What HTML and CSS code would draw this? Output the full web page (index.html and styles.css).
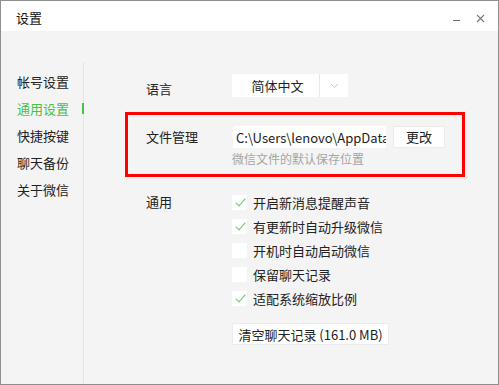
FILE: index.html
```html
<!DOCTYPE html>
<html lang="zh-CN">
<head>
    <meta charset="UTF-8">
    <meta name="viewport" content="width=device-width, initial-scale=1.0">
    <title>设置</title>
    <link rel="stylesheet" href="styles.css">
</head>
<body>

    <div class="window">
        <div class="titlebar">
            <span class="title">设置</span>
            <span class="win-min"></span>
            <span class="win-close">
                <svg width="9" height="9" viewBox="0 0 9 9"><path d="M1 1 L8 8 M8 1 L1 8" stroke="#7a7a7a" stroke-width="1.1" fill="none"/></svg>
            </span>
        </div>

        <div class="main">
            <ul class="sidebar">
                <li>帐号设置</li>
                <li class="active">通用设置</li>
                <li>快捷按键</li>
                <li>聊天备份</li>
                <li>关于微信</li>
            </ul>

            <div class="content">
                <div class="section lang-section">
                    <div class="label">语言</div>
                    <div class="select">
                        <span class="select-value">简体中文</span>
                        <span class="select-arrow">
                            <svg width="9" height="6" viewBox="0 0 9 6"><path d="M1 1 L4.5 4.5 L8 1" stroke="#c8c8c8" stroke-width="1" fill="none"/></svg>
                        </span>
                    </div>
                </div>

                <!-- highlighted block -->
                <div class="section file-section">
                    <div class="label">文件管理</div>
                    <div>
                        <div class="file-row">
                            <input class="path-input" type="text" value="C:\Users\lenovo\AppData\Roaming\Tencent\WeChat" readonly>
                            <button class="btn change-btn">更改</button>
                        </div>
                        <p class="hint">微信文件的默认保存位置</p>
                    </div>
                </div>

                <div class="section general-section">
                    <div class="label">通用</div>
                    <div class="options">
                        <label class="option"><span class="check on"></span>开启新消息提醒声音</label>
                        <label class="option"><span class="check on"></span>有更新时自动升级微信</label>
                        <label class="option"><span class="check"></span>开机时自动启动微信</label>
                        <label class="option"><span class="check"></span>保留聊天记录</label>
                        <label class="option"><span class="check on"></span>适配系统缩放比例</label>
                        <button class="btn clear-btn">清空聊天记录 (161.0 MB)</button>
                    </div>
                </div>
            </div>
        </div>
    </div>

</body>
</html>
```

FILE: styles.css
```css
body {
    margin: 0;
    font-family: "Noto Sans CJK SC", "Noto Sans", sans-serif;
    font-size: 13px;
    color: #222;
}

.window {
    width: 499px;
    height: 385px;
    box-sizing: border-box;
    border: 1px solid #8f8f8f;
    background-color: #f4f4f4;
    display: flex;
    flex-direction: column;
}

.titlebar {
    height: 30px;
    background-color: #fff;
    display: flex;
    align-items: center;
    padding: 2px 0 0 15px;
    box-sizing: border-box;
}

.title {
    flex: 1;
    font-size: 13px;
    color: #111;
}

.win-min {
    width: 7px;
    height: 1px;
    background-color: #6f6f6f;
    margin: 6px 16px 0 0;
}

.win-close {
    display: flex;
    margin: 2px 13px 0 0;
}

.main {
    flex: 1;
    display: flex;
}

.sidebar {
    list-style: none;
    margin: 31px 0 0 0;
    padding: 6px 0 0 16px;
    width: 66px;
    border-right: 1px solid #e4e4e4;
}

.sidebar li {
    line-height: 27px;
    position: relative;
    color: #222;
}

.sidebar li.active {
    color: #46c346;
}

.sidebar li.active::after {
    content: "";
    position: absolute;
    right: -1px;
    top: 8px;
    width: 2px;
    height: 11px;
    background-color: #46c346;
}

.content {
    flex: 1;
    padding: 43px 0 0 41px;
}

.section {
    display: grid;
    grid-template-columns: 86px auto;
}

.lang-section,
.general-section {
    padding-left: 21px;
}

.label {
    line-height: 24px;
}

.lang-section .label {
    line-height: 23px;
    padding-top: 3px;
}

.select {
    display: flex;
    width: 116px;
    height: 23px;
    background-color: #fff;
}

.select-value {
    width: 88px;
    text-align: center;
    line-height: 23px;
    padding-left: 4px;
    box-sizing: border-box;
    border-right: 1px solid #e8e8e8;
}

.select-arrow {
    flex: 1;
    display: flex;
    align-items: center;
    justify-content: center;
}

.file-section {
    margin-top: 12px;
    width: 340px;
    box-sizing: border-box;
    border: 3px solid #ff0000;
    padding: 10px 0 7px 18px;
}

.file-section .label {
    line-height: 24px;
}

.file-row {
    display: flex;
    align-items: center;
}

.path-input {
    width: 153px;
    height: 22px;
    box-sizing: border-box;
    border: none;
    padding: 0 0 0 3px;
    margin: 1px 0 0 1px;
    font-family: inherit;
    font-size: 13px;
    color: #222;
    background-color: #fff;
    outline: none;
}

.btn {
    background-color: #fff;
    border: 1px solid #ececec;
    font-family: inherit;
    font-size: 13px;
    color: #222;
    height: 22px;
    padding: 0;
    cursor: pointer;
}

.change-btn {
    width: 52px;
    margin-left: 7px;
}

.hint {
    margin: 3px 0 0 0;
    font-size: 12px;
    line-height: 16px;
    color: #a5a5a5;
}

.general-section {
    margin-top: 13px;
}

.options {
    display: flex;
    flex-direction: column;
    align-items: flex-start;
}

.option {
    display: flex;
    align-items: center;
    height: 24px;
}

.check {
    width: 15px;
    height: 15px;
    background-color: #fff;
    margin-right: 6px;
    position: relative;
}

.check.on::after {
    content: "";
    position: absolute;
    left: 6px;
    top: 1px;
    width: 4px;
    height: 9px;
    border: solid #6cc66c;
    border-width: 0 1px 1px 0;
    transform: rotate(42deg);
}

.clear-btn {
    width: 157px;
    margin-top: 13px;
}
```
